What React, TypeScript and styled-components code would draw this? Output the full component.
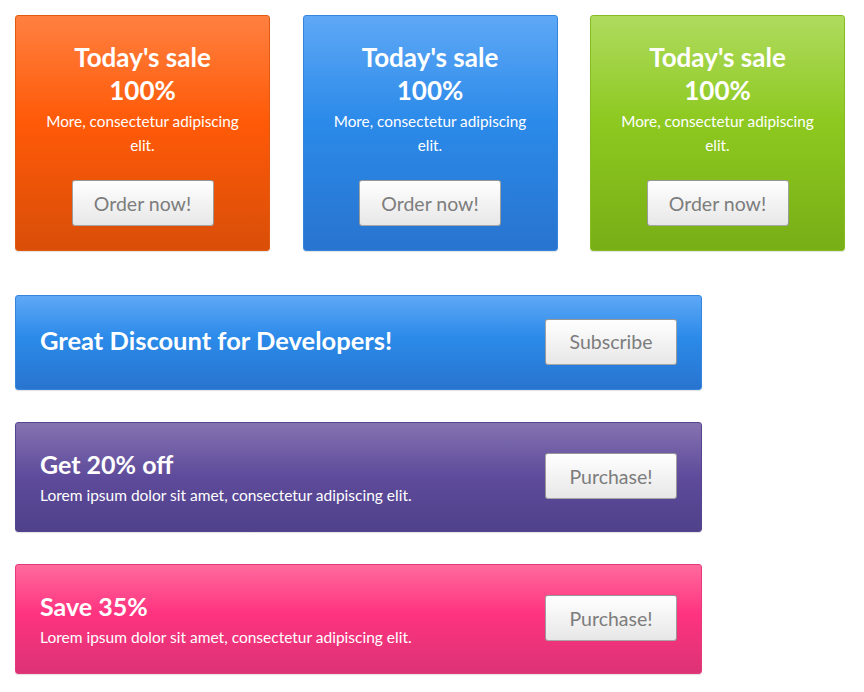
import React from "react";
import styled, { createGlobalStyle } from "styled-components";

const Global = createGlobalStyle`
  html, body { margin: 0; padding: 0; background: #fff; }
  body { font-family: Lato, "Liberation Sans", sans-serif; }
`;

type Tone = "orange" | "blue" | "green" | "purple" | "pink";

const tones: Record<Tone, { bg: string; border: string }> = {
  orange: {
    bg: "linear-gradient(to bottom, #ff8040 0%, #ff5a08 45%, #d94e08 100%)",
    border: "#e05a10",
  },
  blue: {
    bg: "linear-gradient(to bottom, #5ea8f6 0%, #2b8ae9 45%, #2874cf 100%)",
    border: "#3685dd",
  },
  green: {
    bg: "linear-gradient(to bottom, #afdb5e 0%, #8dc920 45%, #78ae16 100%)",
    border: "#86bd22",
  },
  purple: {
    bg: "linear-gradient(to bottom, #8472b0 0%, #5e4b9b 50%, #4f418a 100%)",
    border: "#55458f",
  },
  pink: {
    bg: "linear-gradient(to bottom, #ff6a9c 0%, #ff3380 45%, #dc3375 100%)",
    border: "#e63a7c",
  },
};

const Page = styled.div`
  padding: 15px;
  width: 829px;
`;

const CardRow = styled.div`
  display: grid;
  grid-template-columns: repeat(3, 255px);
  column-gap: 32.5px;
`;

const Card = styled.div<{ $tone: Tone }>`
  box-sizing: border-box;
  height: 236px;
  background: ${(p) => tones[p.$tone].bg};
  border: 1px solid ${(p) => tones[p.$tone].border};
  border-radius: 3px;
  box-shadow: 0 1px 1px rgba(0, 0, 0, 0.12);
  color: #fff;
  text-align: center;
  display: flex;
  flex-direction: column;
  align-items: center;
  padding: 25px 20px 0;
`;

const CardTitle = styled.div`
  font-weight: 700;
  font-size: 26px;
  line-height: 33px;
`;

const CardText = styled.div`
  font-size: 15.3px;
  line-height: 24px;
  margin-top: 2px;
  padding: 0 8px;
`;

const Button = styled.button<{ $w: number }>`
  box-sizing: border-box;
  width: ${(p) => p.$w}px;
  height: 46px;
  background: linear-gradient(to bottom, #ffffff 0%, #e7e7e7 100%);
  border: 1px solid rgba(0, 0, 0, 0.35);
  border-radius: 3px;
  color: #7d7d7d;
  font-family: Lato, "Liberation Sans", sans-serif;
  font-size: 19.5px;
  padding: 0;
  cursor: pointer;
  flex-shrink: 0;
`;

const CardButton = styled(Button)`
  margin-top: 23px;
`;

const Banner = styled.div<{ $tone: Tone; $h: number; $gap: number }>`
  box-sizing: border-box;
  width: 687px;
  height: ${(p) => p.$h}px;
  margin-top: ${(p) => p.$gap}px;
  background: ${(p) => tones[p.$tone].bg};
  border: 1px solid ${(p) => tones[p.$tone].border};
  border-radius: 3px;
  box-shadow: 0 1px 1px rgba(0, 0, 0, 0.12);
  color: #fff;
  display: flex;
  align-items: center;
  justify-content: space-between;
  padding: 0 24px 2px 24px;
`;

const BannerBody = styled.div`
  display: flex;
  flex-direction: column;
  padding-top: 3px;
`;

const BannerHeadline = styled.div`
  font-weight: 700;
  font-size: 25.5px;
  line-height: 32px;
  padding-bottom: 3px;
`;

const BannerTitle = styled.div`
  font-weight: 700;
  font-size: 25px;
  line-height: 30px;
`;

const BannerText = styled.div`
  font-size: 15.5px;
  line-height: 24px;
  margin-top: 4px;
`;

const cards: Tone[] = ["orange", "blue", "green"];

export default function App() {
  return (
    <>
      <Global />
      <Page>
        <CardRow>
          {cards.map((t) => (
            <Card key={t} $tone={t}>
              <CardTitle>Today's sale</CardTitle>
              <CardTitle>100%</CardTitle>
              <CardText>More, consectetur adipiscing elit.</CardText>
              <CardButton $w={142}>Order now!</CardButton>
            </Card>
          ))}
        </CardRow>
        <Banner $tone="blue" $h={95} $gap={44}>
          <BannerHeadline>Great Discount for Developers!</BannerHeadline>
          <Button $w={132}>Subscribe</Button>
        </Banner>
        <Banner $tone="purple" $h={110} $gap={32}>
          <BannerBody>
            <BannerTitle>Get 20% off</BannerTitle>
            <BannerText>Lorem ipsum dolor sit amet, consectetur adipiscing elit.</BannerText>
          </BannerBody>
          <Button $w={132}>Purchase!</Button>
        </Banner>
        <Banner $tone="pink" $h={110} $gap={32}>
          <BannerBody>
            <BannerTitle>Save 35%</BannerTitle>
            <BannerText>Lorem ipsum dolor sit amet, consectetur adipiscing elit.</BannerText>
          </BannerBody>
          <Button $w={132}>Purchase!</Button>
        </Banner>
      </Page>
    </>
  );
}
